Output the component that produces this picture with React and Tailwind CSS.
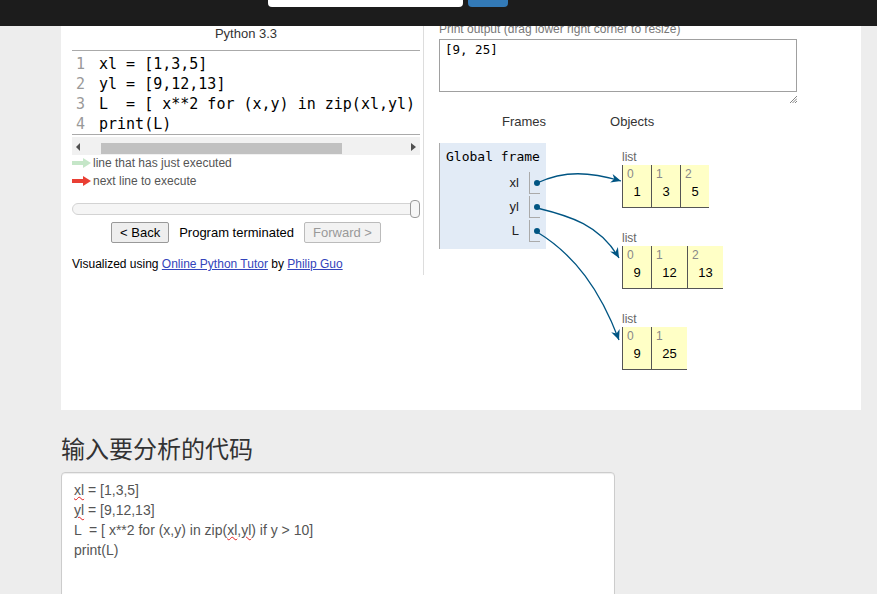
import React from "react";

const sans = "font-['Liberation_Sans',Arial,sans-serif]";
const mono = "font-['DejaVu_Sans_Mono',monospace]";

function ArrowHead({ x, y, dx, dy }) {
  const len = Math.hypot(dx, dy);
  const ux = dx / len;
  const uy = dy / len;
  const px = -uy;
  const py = ux;
  const L = 10;
  const W = 4.5;
  const N = 7;
  const pts = [
    [x, y],
    [x - ux * L + px * W, y - uy * L + py * W],
    [x - ux * N, y - uy * N],
    [x - ux * L - px * W, y - uy * L - py * W],
  ]
    .map((p) => p.map((n) => n.toFixed(2)).join(","))
    .join(" ");
  return <polygon points={pts} fill="#005583" />;
}

const connectors = [
  { d: "M537 183 C 565 170, 590 172, 621 181", tip: [621, 181], dir: [31, 9] },
  { d: "M537 208 C 570 216, 600 225, 619 258", tip: [619, 258], dir: [19, 33] },
  { d: "M537 232 C 575 255, 600 290, 619 340", tip: [619, 340], dir: [19, 50] },
];

function ListObj({ values }) {
  return (
    <div>
      <div className="text-[12px] leading-[16px] text-[#666]">list</div>
      <div className="flex">
        {values.map((v, i) => (
          <div
            key={i}
            className={
              String(v).length > 1
                ? "w-[36px] h-[43px] bg-[#ffffc6] border-l border-b border-[#555] pt-[2px]"
                : "w-[29px] h-[43px] bg-[#ffffc6] border-l border-b border-[#555] pt-[2px]"
            }
          >
            <div className="pl-[4px] text-[12px] leading-[14px] text-[#888]">{i}</div>
            <div className="mt-[3px] text-center text-[13px] leading-[16px] text-black">{v}</div>
          </div>
        ))}
      </div>
    </div>
  );
}

function LegendArrow({ color }) {
  return (
    <svg width="19" height="10" viewBox="0 0 19 10" className="shrink-0">
      <rect x="0" y="3" width="12" height="4" fill={color} />
      <polygon points="11,0 19,5 11,10" fill={color} />
    </svg>
  );
}

const codeLines = [
  "xl = [1,3,5]",
  "yl = [9,12,13]",
  "L  = [ x**2 for (x,y) in zip(xl,yl) if y > 10]",
  "print(L)",
];

function Squiggle({ children }) {
  return (
    <span className="underline decoration-wavy decoration-[#e02020] decoration-1 underline-offset-[1px]">
      {children}
    </span>
  );
}

export default function App() {
  return (
    <div className={"relative min-h-screen bg-[#ededed] overflow-hidden " + sans}>
      {/* top navbar overlay */}
      <div className="absolute top-0 left-0 right-0 h-[26px] bg-[#1c1c1c] z-10 flex items-start">
        <div className="ml-[268px] w-[195px] h-[7px] bg-white rounded-b-[4px]" />
        <div className="ml-[5px] w-[40px] h-[7px] bg-[#337ab7] rounded-b-[4px]" />
      </div>

      <div className="pl-[61px]">
        {/* white visualizer panel */}
        <div className="relative w-[800px] h-[410px] bg-white flex">
          {/* left column */}
          <div className="ml-[11px] w-[348px] pt-[26px]">
            <div className="text-center text-[13px] leading-[15px] text-[#333]">Python 3.3</div>
            <div className={"mt-[9px] border-t border-b border-[#aaa] pt-[3px] overflow-hidden " + mono}>
              {codeLines.map((l, i) => (
                <div key={i} className="flex h-[20px] text-[15px] leading-[20px] whitespace-pre">
                  <div className="w-[27px] shrink-0 pl-[4px] text-[#999]">{i + 1}</div>
                  <div className="text-black">{l}</div>
                </div>
              ))}
            </div>
            {/* horizontal scrollbar */}
            <div className="mt-[2px] h-[18px] bg-[#f1f1f1] flex items-start pt-[6px] relative">
              <svg width="5" height="8" viewBox="0 0 5 8" className="absolute left-[4px] top-[6px]">
                <polygon points="4,0 0,4 4,8" fill="#505050" />
              </svg>
              <div className="ml-[29px] w-[241px] h-[11px] bg-[#c1c1c1]" />
              <svg width="5" height="8" viewBox="0 0 5 8" className="absolute right-[4px] top-[6px]">
                <polygon points="0,0 5,4 0,8" fill="#505050" />
              </svg>
            </div>
            {/* legend */}
            <div className="-mt-[1px] text-[12px] text-[#555]">
              <div className="h-[18px] flex items-center gap-[2px]">
                <LegendArrow color="#c5e6c8" />
                <span>line that has just executed</span>
              </div>
              <div className="h-[18px] flex items-center gap-[2px]">
                <LegendArrow color="#e93f34" />
                <span>next line to execute</span>
              </div>
            </div>
            {/* slider */}
            <div className="relative mt-[13px] h-[12px] rounded-full border border-[#d3d3d3] bg-[#f5f5f5]">
              <div className="absolute right-[-1px] top-[-4px] w-[10px] h-[18px] rounded-[4px] border border-[#999] bg-[#f6f6f6]" />
            </div>
            {/* buttons */}
            <div className="mt-[7px] flex justify-center items-center gap-[10px] text-[13px]">
              <div className="h-[21px] px-[8px] flex items-center border border-[#999] rounded-[2px] bg-[#eeeeee] text-black">
                &lt; Back
              </div>
              <span className="text-black">Program terminated</span>
              <div className="h-[21px] px-[8px] flex items-center border border-[#bbb] rounded-[2px] bg-[#f2f2f2] text-[#999]">
                Forward &gt;
              </div>
            </div>
            <div className="mt-[14px] text-[12px] leading-[15px] text-black">
              Visualized using <span className="text-[#3344bb] underline">Online Python Tutor</span> by{" "}
              <span className="text-[#3344bb] underline">Philip Guo</span>
            </div>
          </div>

          {/* divider */}
          <div className="ml-[3px] w-px h-[275px] bg-[#dddddd]" />

          {/* right column */}
          <div className="ml-[15px] pt-[22px]">
            <div className="text-[12px] leading-[14px] text-[#777]">
              Print output (drag lower right corner to resize)
            </div>
            <div className="mt-[3px] w-[358px]">
              <div className={"h-[53px] border border-[#a0a0a0] pl-[5px] pt-[2px] text-[12.5px] leading-[16px] text-black " + mono}>
                [9, 25]
              </div>
              <div className="flex justify-end mt-[4px]">
                <svg width="7" height="7" viewBox="0 0 7 7">
                  <line x1="7" y1="0" x2="0" y2="7" stroke="#666" strokeWidth="0.8" />
                  <line x1="7" y1="2.5" x2="2.5" y2="7" stroke="#666" strokeWidth="0.8" />
                  <line x1="7" y1="5" x2="5" y2="7" stroke="#666" strokeWidth="0.8" />
                </svg>
              </div>
            </div>
            <div className="mt-[11px] flex text-[13px] leading-[15px] text-[#333]">
              <span className="ml-[63px]">Frames</span>
              <span className="ml-[64px]">Objects</span>
            </div>
            <div className="mt-[14px] flex items-start">
              {/* global frame */}
              <div className="w-[107px] bg-[#e2ebf6] border-l border-[#aaa] pt-[6px] pb-[7px]">
                <div className={"pl-[6px] text-[13px] leading-[16px] text-black " + mono}>Global frame</div>
                <div className="mt-[7px] flex flex-col gap-[2px]">
                  {["xl", "yl", "L"].map((n) => (
                    <div key={n} className="flex items-center justify-end gap-[10px] pr-[6px] h-[22px]">
                      <span className="text-[13px] text-[#222]">{n}</span>
                      <div className="w-[11px] h-[22px] border-l border-b border-[#aaa] flex items-center pl-[4px]">
                        <div className="w-[6px] h-[6px] rounded-full bg-[#005583]" />
                      </div>
                    </div>
                  ))}
                </div>
              </div>
              {/* objects */}
              <div className="ml-[76px] pt-[6px] flex flex-col gap-[22px]">
                <ListObj values={[1, 3, 5]} />
                <ListObj values={[9, 12, 13]} />
                <ListObj values={[9, 25]} />
              </div>
            </div>
          </div>

          {/* connector arrows */}
          <svg
            className="absolute left-0 top-0 pointer-events-none"
            width="800"
            height="410"
            viewBox="61 0 800 410"
          >
            {connectors.map((c, i) => (
              <g key={i}>
                <path d={c.d} fill="none" stroke="#005583" strokeWidth="1.3" />
                <ArrowHead x={c.tip[0]} y={c.tip[1]} dx={c.dir[0]} dy={c.dir[1]} />
              </g>
            ))}
          </svg>
        </div>

        {/* input section */}
        <div className="mt-[25px] text-[24px] leading-[26px] text-[#333] font-['Noto_Sans_CJK_SC',sans-serif]">
          输入要分析的代码
        </div>
        <div className="mt-[11px] w-[554px] h-[200px] bg-white border border-[#ccc] rounded-[4px] shadow-[inset_0_1px_1px_rgba(0,0,0,0.075)] pl-[12px] pt-[7px] text-[14px] leading-[20px] text-[#555] whitespace-pre">
          <div>
            <Squiggle>xl</Squiggle> = [1,3,5]
          </div>
          <div>
            <Squiggle>yl</Squiggle> = [9,12,13]
          </div>
          <div>
            L  = [ x**2 for (x,y) in zip(<Squiggle>xl</Squiggle>,<Squiggle>yl</Squiggle>) if y &gt; 10]
          </div>
          <div>print(L)</div>
        </div>
      </div>
    </div>
  );
}
